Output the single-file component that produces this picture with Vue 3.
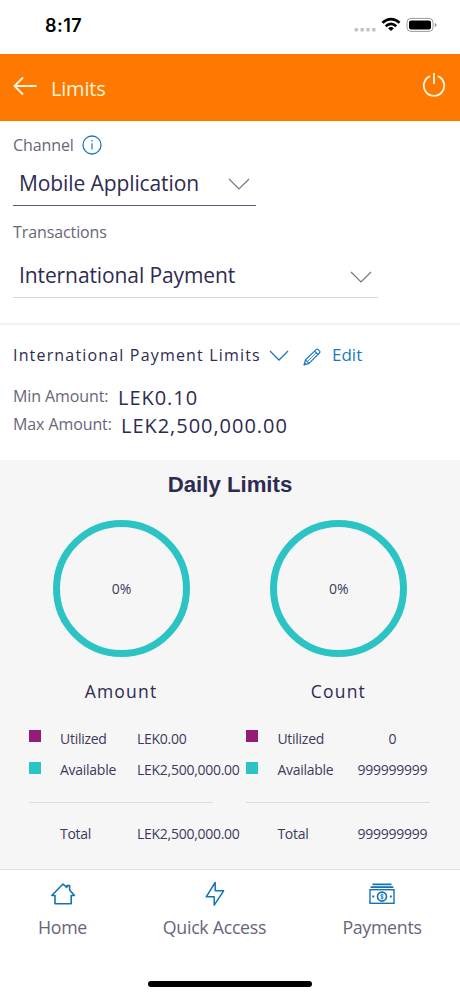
<script setup>
const charts = [
  { name: 'Amount', utilized: 'LEK0.00', available: 'LEK2,500,000.00', total: 'LEK2,500,000.00' },
  { name: 'Count', utilized: '0', available: '999999999', total: '999999999' },
]
</script>

<template>
  <div class="screen">
    <div class="status">
      <span class="time">8:17</span>
      <svg width="84" height="18" viewBox="0 0 84 18">
        <g fill="#c4c4c4">
          <rect x="0.5" y="11" width="3.6" height="3.6" rx="1" />
          <rect x="6.4" y="11" width="3.6" height="3.6" rx="1" />
          <rect x="12.2" y="11" width="3.6" height="3.6" rx="1" />
          <rect x="18" y="11" width="3.6" height="3.6" rx="1" />
        </g>
        <g fill="none" stroke="#000" stroke-width="2.6">
          <path d="M28.4 5.8Q37 -1.6 45.6 5.8" />
          <path d="M31.7 9.2Q37 4.6 42.3 9.2" />
        </g>
        <path d="M34.1 11.2Q37 8.9 39.9 11.2L37 14Z" fill="#000" />
        <rect x="53" y="1.4" width="26" height="13" rx="4" fill="none" stroke="#999" />
        <rect x="55" y="3.4" width="22" height="9" rx="2.2" />
        <path d="M80.8 5.9Q82.5 6.3 82.5 7.9T80.8 9.9Z" fill="#888" />
      </svg>
    </div>

    <header class="bar">
      <svg class="back" width="24" height="20" viewBox="0 0 24 20" fill="none" stroke="#fff6dc" stroke-width="1.8">
        <path d="M23.5 10H1.5M10 1.5L1.5 10L10 18.5" />
      </svg>
      <h1>Limits</h1>
      <svg class="power" width="24" height="26" viewBox="0 0 24 26" fill="none" stroke="#fff6dc" stroke-width="1.8">
        <path d="M8.2 4.2A10.2 10.2 0 1 0 15.8 4.2M12 1V12" />
      </svg>
    </header>

    <section class="filters">
      <div class="label channel">
        <span>Channel</span>
        <svg width="20" height="20" viewBox="0 0 20 20" fill="none" stroke="#1a78c2">
          <circle cx="10" cy="10" r="9" stroke-width="1.3" />
          <path d="M10 8.2V14.5M10 5V6.6" stroke-width="1.2" />
        </svg>
      </div>
      <div class="select first">
        <span>Mobile Application</span>
        <svg width="22" height="13" viewBox="0 0 22 13" fill="none" stroke="#77777c" stroke-width="1.2"><path d="M1 1L11 11L21 1" /></svg>
      </div>
      <div class="label trans"><span>Transactions</span></div>
      <div class="select second">
        <span>International Payment</span>
        <svg width="22" height="13" viewBox="0 0 22 13" fill="none" stroke="#77777c" stroke-width="1.2"><path d="M1 1L11 11L21 1" /></svg>
      </div>
    </section>

    <section class="details">
      <div class="heading">
        <span class="title">International Payment Limits</span>
        <svg class="chev" width="20" height="12" viewBox="0 0 20 12" fill="none" stroke="#1a78c2" stroke-width="1.3"><path d="M1 1L10 10L19 1" /></svg>
        <svg class="pencil" width="18" height="18" viewBox="0 0 18 18" fill="none" stroke="#1a78c2" stroke-width="1.2" stroke-linejoin="round">
          <path d="M1 17L2.5 11.8L13.2 1.6Q14.2 0.7 15.3 1.6L16.5 2.8Q17.5 3.9 16.4 5L6 15.4ZM2.5 11.8L6 15.4M11.6 3.2L14.9 6.5M1 17L2.8 15.3" />
          <path d="M13 5.2L4.6 13.4" stroke-width="0.8" />
        </svg>
        <span class="edit">Edit</span>
      </div>
      <div class="bound"><span class="key">Min Amount:</span><span class="val">LEK0.10</span></div>
      <div class="bound"><span class="key max">Max Amount:</span><span class="val">LEK2,500,000.00</span></div>
    </section>

    <section class="daily">
      <h2>Daily Limits</h2>
      <div class="charts">
        <div v-for="c in charts" :key="c.name" class="chart" :class="'by-' + c.name.toLowerCase()">
          <div class="ring">0%</div>
          <div class="name">{{ c.name }}</div>
          <div class="row"><i class="sq used"></i><span class="k">Utilized</span><span class="v">{{ c.utilized }}</span></div>
          <div class="row available"><i class="sq"></i><span class="k">Available</span><span class="v">{{ c.available }}</span></div>
          <div class="line"></div>
          <div class="row"><i class="sq none"></i><span class="k">Total</span><span class="v">{{ c.total }}</span></div>
        </div>
      </div>
    </section>

    <nav class="nav">
      <div class="item home">
        <svg width="26" height="26" viewBox="0 0 26 26" fill="none" stroke="#1272b6" stroke-width="1.6" stroke-linejoin="round">
          <path d="M1.8 14.5L13 3L16.8 6.3L17 4.6H19.6V9L24.4 14.5H21.2V22.7H5V14.5Z" />
        </svg>
        <span>Home</span>
      </div>
      <div class="item quick">
        <svg width="26" height="26" viewBox="0 0 26 26" fill="none" stroke="#1272b6" stroke-width="1.5" stroke-linejoin="round">
          <path d="M13.2 1.5L4.2 15.8H12.2V24.2L21.6 9.8H13.2Z" />
        </svg>
        <span>Quick Access</span>
      </div>
      <div class="item pay">
        <svg width="26" height="26" viewBox="0 0 26 26" fill="none" stroke="#1272b6" stroke-width="1.4">
          <path d="M3.5 3.4H22.5M1.6 6.2H24.4" stroke-width="1.7" />
          <rect x="1" y="8.7" width="24" height="13.6" />
          <circle cx="13" cy="15.6" r="4.5" stroke-width="1.6" />
          <path d="M14.6 14.1Q13 12.9 12 14T13 15.6T14 17.3Q13 18.2 11.5 17.2M13 12.8V18.4" stroke-width="0.8" />
          <path d="M3.2 15.6H5.2M20.8 15.6H22.8" stroke-width="2" />
        </svg>
        <span>Payments</span>
      </div>
    </nav>
    <div class="foot"><div class="indicator"></div></div>
  </div>
</template>

<style>
body { margin: 0; background: #fff; }
</style>

<style scoped>
.screen { width: 460px; height: 996px; display: flex; flex-direction: column; overflow: hidden; background: #fff; font-family: "Open Sans", "Noto Sans", sans-serif; color: #2e2b50; white-space: nowrap; }
.screen * { box-sizing: border-box; }
svg { display: block; flex: none; }
.status { height: 54px; flex: none; display: flex; justify-content: space-between; align-items: flex-start; padding: 17px 22px 0 45px; }
.time { font: 600 18px/17px Inter, sans-serif; letter-spacing: 0.5px; color: #000; }
.bar { height: 67px; flex: none; background: #ff7900; display: flex; align-items: flex-start; padding: 0 14px 0 13px; }
.back { margin-top: 22px; }
.bar h1 { margin: 21px 0 0 14px; font-size: 20px; letter-spacing: -0.2px; line-height: 28px; font-weight: 400; color: #fff6dc; }
.power { margin: 18px 0 0 auto; }
.filters { height: 204px; flex: none; padding: 14px 13px 0; border-bottom: 2px solid #f1f1f2; }
.label { height: 20px; line-height: 20px; font-size: 16px; letter-spacing: -0.1px; color: #686679; display: flex; }
.channel svg { margin-left: 8.5px; }
.select { display: flex; justify-content: space-between; align-items: flex-start; font-size: 21px; letter-spacing: -0.1px; line-height: 30px; padding: 0 6px; }
.first { width: 243px; height: 51px; border-bottom: 1px solid #5c5988; padding-top: 13px; }
.first svg { margin-top: 10px; }
.trans { margin-top: 16px; }
.second { width: 365px; height: 56px; border-bottom: 1px solid #d5d5da; padding-top: 18px; }
.second svg { margin-top: 11px; }
.details { height: 135px; flex: none; padding: 18px 13px 0; }
.heading { display: flex; align-items: flex-start; height: 41px; line-height: 24px; font-size: 16px; }
.title { width: 247px; letter-spacing: 1.17px; }
.chev { margin: 7px 0 0 9px; }
.pencil { margin: 5px 0 0 14px; }
.edit { margin-left: 11px; font-size: 17px; line-height: 23px; color: #1a78c2; }
.bound { display: flex; height: 28px; align-items: flex-start; }
.key { width: 105px; font-size: 16px; letter-spacing: -0.1px; line-height: 24px; color: #686679; }
.key.max { width: 108px; }
.val { font-size: 20px; line-height: 28px; letter-spacing: 0.97px; }
.daily { display: flow-root; height: 410px; flex: none; background: #f6f6f7; border-bottom: 1px solid #e4e4e6; }
.daily h2 { margin: 11px 0 0; height: 28px; font: bold 22.2px/28px "Liberation Sans", Arial, sans-serif; text-align: center; }
.charts { display: flex; gap: 33px; padding: 21px 29px 0; }
.chart { width: 184px; flex: none; }
.by-count { margin-left: 0.4px; }
.ring { width: 137px; height: 137px; margin-left: 24px; border: 7px solid #2bc3c3; border-radius: 50%; font-size: 14px; line-height: 124px; color: #3d3a5b; text-align: center; }
.name { height: 66px; padding-top: 22px; line-height: 24px; font-size: 17.5px; letter-spacing: 1.2px; text-align: center; }
.row { display: flex; height: 32px; align-items: flex-start; font-size: 14px; letter-spacing: -0.27px; line-height: 21px; color: #3d3a5b; padding-top: 5px; }
.sq { width: 12px; height: 12px; margin-top: 2px; background: #2bc3c3; flex: none; }
.available { padding-top: 4px; }
.available .sq { margin-top: 3px; }
.sq.used { background: #961b76; }
.sq.none { background: transparent; }
.k { margin-left: 19px; width: 77px; flex: none; }
.line { height: 1px; margin: 15px 0 15px; background: #dcdce1; }
.by-count .v { width: 76px; text-align: center; }
.nav { height: 88px; flex: none; display: flex; padding-top: 11px; }
.item { display: flex; flex-direction: column; align-items: center; font-size: 17.8px; letter-spacing: -0.3px; line-height: 26px; color: #686679; }
.item span { margin-top: 7px; }
.home { width: 125px; }
.quick { width: 179px; }
.pay { width: 156px; }
.foot { display: flex; justify-content: center; padding-top: 23px; }
.indicator { width: 164px; height: 6px; border-radius: 3px; background: #000; }
</style>
